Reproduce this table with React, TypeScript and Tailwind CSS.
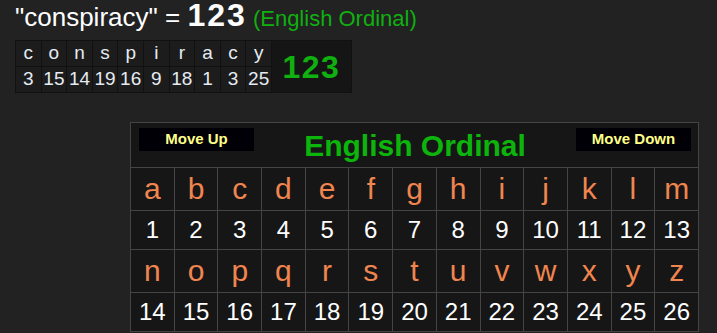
const word = 'conspiracy'
const alphabet = 'abcdefghijklmnopqrstuvwxyz'.split('')

function ordinal(ch: string) {
  return ch.charCodeAt(0) - 96
}

const font = { fontFamily: '"Liberation Sans", Arial, sans-serif' }

function Breakdown() {
  const letters = word.split('')
  const total = letters.reduce((sum, ch) => sum + ordinal(ch), 0)
  return (
    <div className="mt-[11px] ml-[15px] flex w-fit bg-[#111] p-px gap-px">
      <div className="grid grid-cols-[repeat(10,24.6px)] gap-px">
        {letters.map((ch, i) => (
          <div key={`l${i}`} className="flex h-[25px] items-center justify-center bg-[#1c1c1c] text-[19px] text-[#e4ebf2]">
            {ch}
          </div>
        ))}
        {letters.map((ch, i) => (
          <div key={`n${i}`} className="flex h-[25px] items-center justify-center bg-[#1c1c1c] text-[19px] text-[#e4ebf2]">
            {ordinal(ch)}
          </div>
        ))}
      </div>
      <div className="flex w-[79px] items-center justify-center bg-[#151515] text-[32px] font-bold tracking-[1.5px] text-[#10b010]">
        {total}
      </div>
    </div>
  )
}

function CipherTable() {
  const rows = [alphabet.slice(0, 13), alphabet.slice(13)]
  return (
    <div className="mt-[29px] ml-[130px] w-[569px] border border-[#444] bg-[#444]">
      <div className="grid grid-cols-[repeat(13,minmax(0,1fr))] gap-px">
        <div className="col-span-13 flex h-[44px] items-start justify-between bg-[#161616] pt-[5px] pr-[7px] pl-[8px]">
          <button className="h-[23px] w-[115px] bg-[#000006] text-[15px] font-bold text-[#ffff88]">Move Up</button>
          <span className="text-[30px] font-bold leading-[36px] text-[#0cb40c]">English Ordinal</span>
          <button className="h-[23px] w-[115px] bg-[#000006] text-[15px] font-bold text-[#ffff88]">Move Down</button>
        </div>
        {rows.map((row, r) => (
          <div key={r} className="contents">
            {row.map((ch) => (
              <div key={ch} className="flex h-[42px] items-center justify-center bg-[#161616] pb-[2px] text-[30px] text-[#f0854f]">
                {ch}
              </div>
            ))}
            {row.map((ch) => (
              <div key={`${ch}-n`} className="flex h-[38px] items-center justify-center bg-[#161616] text-[24px] text-white">
                {ordinal(ch)}
              </div>
            ))}
          </div>
        ))}
      </div>
    </div>
  )
}

export default function App() {
  return (
    <div className="h-[333px] w-full overflow-hidden bg-[#222]" style={font}>
      <div className="flex h-[29px] items-baseline whitespace-pre pl-[15px] text-white">
        <span className="text-[26px] leading-[30px]">"{word}" = </span>
        <span className="text-[32px] font-bold leading-[30px] tracking-[2px]">123</span>
        <span className="text-[22px] leading-[30px] text-[#10b010]"> (English Ordinal)</span>
      </div>
      <Breakdown />
      <CipherTable />
    </div>
  )
}
